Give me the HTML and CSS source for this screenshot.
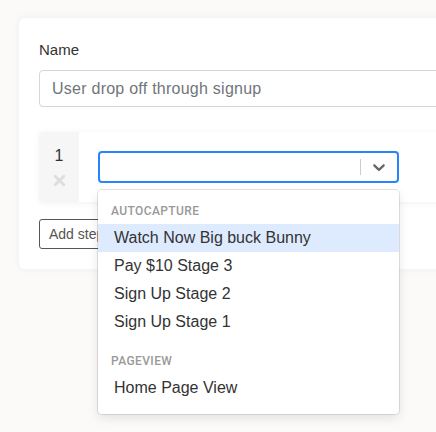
FILE: index.html
```html
<!DOCTYPE html>
<html>
<head>
<meta charset="utf-8">
<link rel="stylesheet" href="styles.css">
</head>
<body>
<div class="page">
  <div class="card">
    <div class="label">Name</div>
    <div class="input">User drop off through signup</div>
    <div class="step">
      <div class="step-num">
        <span class="num">1</span>
        <svg class="remove" width="13" height="13" viewBox="0 0 13 13"><path d="M2.2 2.2L10.8 10.8M10.8 2.2L2.2 10.8" stroke="#dddddd" stroke-width="2.8" stroke-linecap="round"/></svg>
      </div>
      <div class="step-body">
        <div class="select-wrap">
          <div class="select">
            <div class="value"></div>
            <span class="sep"></span>
            <span class="chev">
              <svg width="20" height="20" viewBox="0 0 20 20"><path fill="#666" d="M4.516 7.548c0.436-0.446 1.043-0.481 1.576 0l3.908 3.747 3.908-3.747c0.533-0.481 1.141-0.446 1.574 0 0.436 0.445 0.408 1.197 0 1.615-0.406 0.418-4.695 4.502-4.695 4.502-0.217 0.223-0.502 0.335-0.787 0.335s-0.57-0.112-0.789-0.335c0 0-4.287-4.084-4.695-4.502s-0.436-1.170 0-1.615z"/></svg>
            </span>
          </div>
          <div class="menu">
            <div class="group">
              <div class="group-heading">Autocapture</div>
              <div class="option focused">Watch Now Big buck Bunny</div>
              <div class="option">Pay $10 Stage 3</div>
              <div class="option">Sign Up Stage 2</div>
              <div class="option">Sign Up Stage 1</div>
            </div>
            <div class="group">
              <div class="group-heading">Pageview</div>
              <div class="option">Home Page View</div>
            </div>
          </div>
        </div>
      </div>
    </div>
    <button class="add-btn">Add step</button>
  </div>
</div>
</body>
</html>
```
FILE: styles.css
```css
html, body {
  margin: 0;
  padding: 0;
}
body {
  background: #fbfaf8;
  font-family: "Liberation Sans", Arial, sans-serif;
  color: #333;
  overflow: hidden;
  width: 436px;
  height: 432px;
}
.page {
  padding: 18px 0 0 19px;
}
.card {
  width: 520px;
  background: #fff;
  border-radius: 6px;
  box-shadow: 0 0 10px rgba(0, 0, 0, 0.05);
  padding: 22px 20px 20px 20px;
}
.label {
  font-size: 15px;
  line-height: 20px;
  color: #333;
  margin-bottom: 10px;
}
.input {
  height: 35px;
  border: 1px solid #d4d6da;
  border-radius: 4px;
  padding-left: 12px;
  font-size: 16px;
  letter-spacing: 0.25px;
  line-height: 35px;
  color: #70757a;
}
.step {
  margin-top: 25px;
  display: flex;
  height: 70px;
  border-radius: 4px;
  box-shadow: 0 1px 6px rgba(0, 0, 0, 0.06);
  background: #fff;
}
.step-num {
  width: 40px;
  background: #f6f6f6;
  border-radius: 4px 0 0 4px;
  display: flex;
  flex-direction: column;
  align-items: center;
  padding-top: 15px;
  box-sizing: border-box;
}
.num {
  font-size: 16px;
  line-height: 18px;
  color: #333;
}
.remove {
  display: block;
  margin-top: 9px;
}
.step-body {
  padding: 19px;
}
.select-wrap {
  position: relative;
  width: 301px;
}
.select {
  height: 32px;
  box-sizing: border-box;
  border: 2px solid #2684ff;
  border-radius: 4px;
  display: flex;
  align-items: center;
}
.value {
  flex: 1;
}
.sep {
  width: 1px;
  height: 16px;
  background: #ccc;
}
.chev {
  width: 36px;
  display: flex;
  align-items: center;
  justify-content: center;
  height: 20px;
}
.menu {
  position: absolute;
  top: 39px;
  left: 0;
  width: 301px;
  box-sizing: border-box;
  background: #fff;
  border-radius: 4px;
  box-shadow: 0 0 0 1px rgba(0, 0, 0, 0.1), 0 4px 11px rgba(0, 0, 0, 0.1);
  padding: 4px 0;
  z-index: 2;
}
.group {
  padding: 8px 0;
}
.group-heading {
  font-family: Roboto, "Liberation Sans", sans-serif;
  font-size: 12px;
  line-height: 18px;
  font-weight: 500;
  letter-spacing: 0.4px;
  text-transform: uppercase;
  color: #999;
  padding: 0 13px;
  margin-bottom: 4px;
}
.option {
  height: 28px;
  line-height: 28px;
  padding: 0 16px;
  font-size: 16px;
  color: #333;
}
.option.focused {
  background: #deebff;
}
.add-btn {
  display: block;
  margin-top: 17px;
  height: 30px;
  padding: 0 9px;
  border: 1px solid #555;
  border-radius: 3px;
  background: #fff;
  font-family: "Liberation Sans", Arial, sans-serif;
  font-size: 14px;
  color: #555;
}
```
